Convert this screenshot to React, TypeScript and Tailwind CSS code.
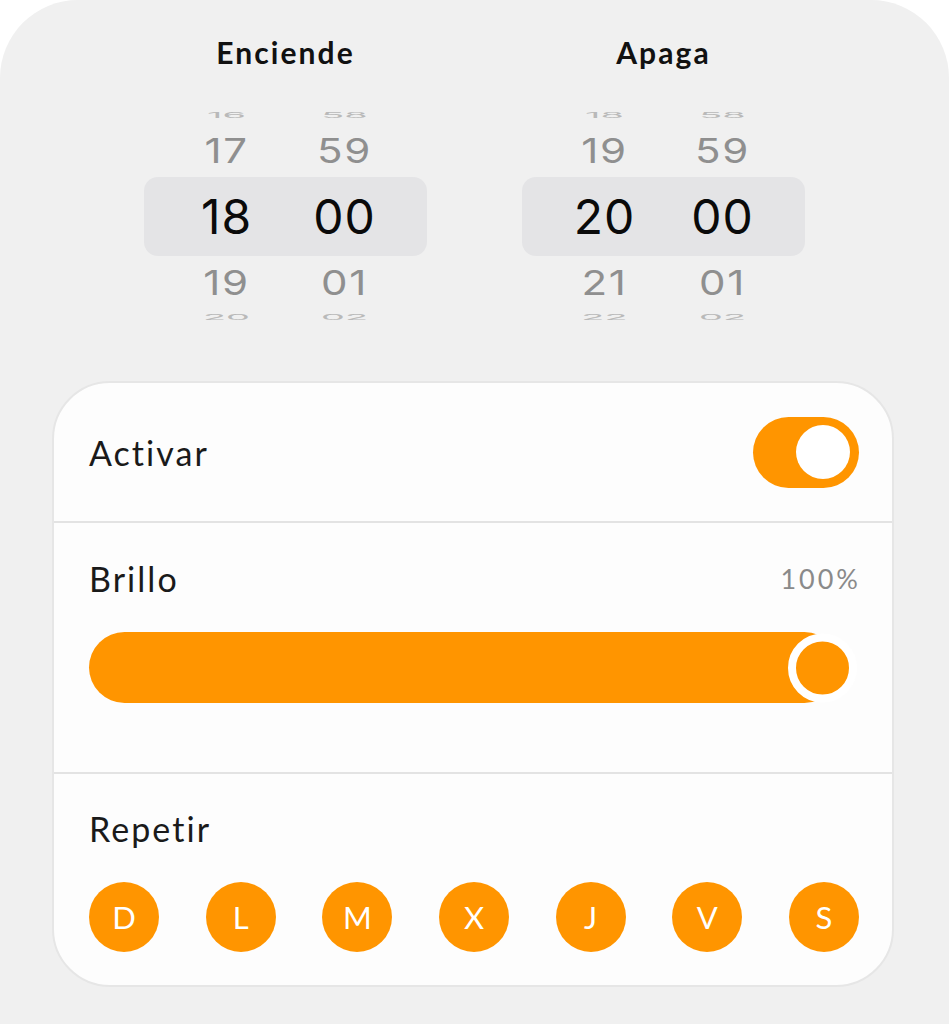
import React from "react";

const ORANGE = "bg-[#ff9500]";

function Picker({ title, h, m }: { title: string; h: number[]; m: string[] }) {
  const pad = (n: number) => String(n).padStart(2, "0");
  return (
    <div className="w-[283px] flex flex-col items-center">
      <div className="h-[29px] leading-[29px] text-[30px] font-bold text-[#111] tracking-[0.07em] font-['Lato',sans-serif]">
        {title}
      </div>
      <div className="mt-[38px] w-full flex flex-col font-['Inter',sans-serif]">
        <div className="h-[20px] flex items-center justify-center text-[#b9b9b9]">
          <div className="w-[118px] text-center text-[38px] leading-none scale-y-[0.2]">{pad(h[0])}</div>
          <div className="w-[118px] text-center text-[38px] leading-none scale-y-[0.2]">{m[0]}</div>
        </div>
        <div className="h-[52px] flex items-center justify-center text-[#8f8f8f]">
          <div className="w-[118px] text-center text-[42px] leading-none scale-y-[0.82] tracking-[0.04em]">{pad(h[1])}</div>
          <div className="w-[118px] text-center text-[42px] leading-none scale-y-[0.82] tracking-[0.04em]">{m[1]}</div>
        </div>
        <div className="h-[79px] rounded-[14px] bg-[#e4e4e6] flex items-center justify-center text-[#0a0a0a]">
          <div className="w-[118px] text-center text-[48px] leading-none tracking-[0.02em]">{pad(h[2])}</div>
          <div className="w-[118px] text-center text-[48px] leading-none tracking-[0.02em]">{m[2]}</div>
        </div>
        <div className="h-[54px] flex items-center justify-center text-[#8f8f8f]">
          <div className="w-[118px] text-center text-[42px] leading-none scale-y-[0.82] tracking-[0.04em]">{pad(h[3])}</div>
          <div className="w-[118px] text-center text-[42px] leading-none scale-y-[0.82] tracking-[0.04em]">{m[3]}</div>
        </div>
        <div className="h-[14px] flex items-center justify-center text-[#b9b9b9]">
          <div className="w-[118px] text-center text-[38px] leading-none scale-y-[0.2]">{pad(h[4])}</div>
          <div className="w-[118px] text-center text-[38px] leading-none scale-y-[0.2]">{m[4]}</div>
        </div>
      </div>
    </div>
  );
}

export default function App() {
  const days = ["D", "L", "M", "X", "J", "V", "S"];
  return (
    <div className="w-[949px] h-[1024px] bg-white">
      <div className="h-full bg-[#f0f0f0] rounded-t-[78px] pt-[38px] flex flex-col font-['Lato',sans-serif]">
        <div className="flex justify-center gap-[95px]">
          <Picker title="Enciende" h={[16, 17, 18, 19, 20]} m={["58", "59", "00", "01", "02"]} />
          <Picker title="Apaga" h={[18, 19, 20, 21, 22]} m={["58", "59", "00", "01", "02"]} />
        </div>

        <div className="mt-[57px] ml-[52px] w-[842px] rounded-[58px] border-2 border-[#e6e6e6] bg-[#fdfdfd] overflow-hidden">
          <div className="h-[138px] flex items-center justify-between pl-[35px] pr-[33px]">
            <span className="text-[34px] leading-[33px] text-[#1a1a1a] tracking-[0.06em]">Activar</span>
            <div className={`w-[106px] h-[71px] rounded-full ${ORANGE} flex items-center justify-end pr-[9px]`}>
              <div className="w-[54px] h-[54px] rounded-full bg-white" />
            </div>
          </div>

          <div className="border-t-2 border-[#e3e3e3] pt-[39px] pb-[69px] pl-[35px] pr-[34px]">
            <div className="flex items-center justify-between h-[33px]">
              <span className="text-[34px] leading-[33px] text-[#1a1a1a] tracking-[0.06em]">Brillo</span>
              <span className="text-[27px] leading-[33px] text-[#8a8a8a] tracking-[0.11em] -mr-[3px]">100%</span>
            </div>
            <div className="relative mt-[37px] h-[71px]">
              <div className={`h-full mr-[18px] rounded-full ${ORANGE}`} />
              <div className={`absolute right-[1px] top-1/2 -translate-y-1/2 w-[69px] h-[69px] rounded-full ${ORANGE} border-[8px] border-white`} />
            </div>
          </div>

          <div className="border-t-2 border-[#e3e3e3] pt-[38px] pb-[33px] pl-[35px] pr-[33px]">
            <div className="text-[34px] leading-[33px] text-[#1a1a1a] tracking-[0.06em]">Repetir</div>
            <div className="mt-[37px] flex justify-between">
              {days.map((d) => (
                <div
                  key={d}
                  className={`w-[70px] h-[70px] rounded-full ${ORANGE} flex items-center justify-center text-white text-[31px] font-normal`}
                >
                  {d}
                </div>
              ))}
            </div>
          </div>
        </div>
      </div>
    </div>
  );
}
